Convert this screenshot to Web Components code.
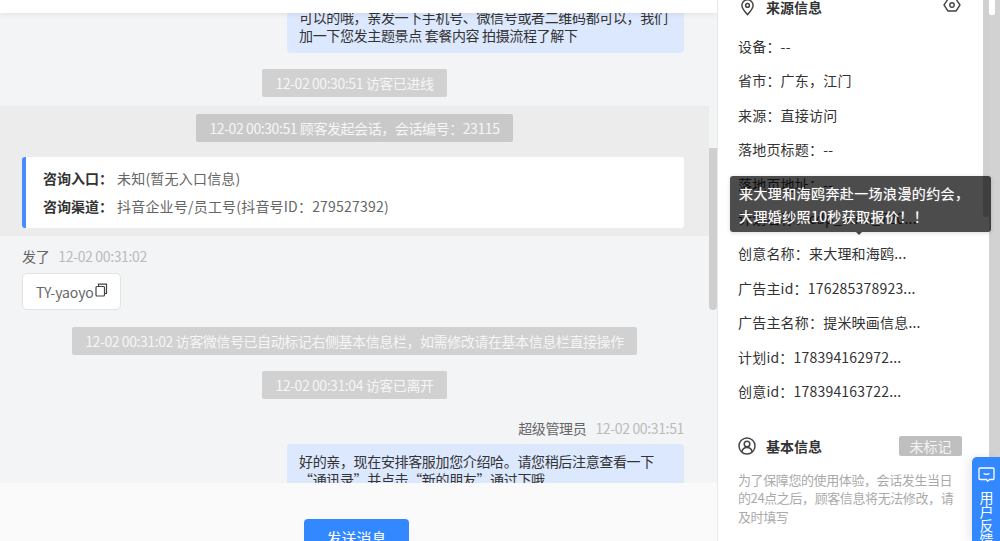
<!DOCTYPE html>
<html lang="zh">
<head>
<meta charset="utf-8">
<title>会话详情</title>
<style>
  html, body { margin: 0; height: 100%; overflow: hidden; }
  body {
    font-family: "Noto Sans CJK SC", "Liberation Sans", sans-serif;
    font-size: 14px;
    color: #333;
  }
</style>
</head>
<body>
<session-page></session-page>

<template id="session-page-tpl">
  <style>
    :host { display: grid; grid-template-columns: 717px 266px 6px 11px; height: 541px; position: relative; overflow: hidden; background: #f3f4f6; }
    .left { position: relative; display: flex; flex-direction: column; height: 541px; overflow: hidden; min-width: 0; }
    .top { height: 13px; flex: none; background: #fff; box-shadow: 0 1px 6px rgba(0,0,0,.08); position: relative; z-index: 1; }
    .scroll { display: grid; grid-template-columns: 709px 8px; height: 470px; flex: none; overflow: hidden; }
    .track { display: flex; flex-direction: column; background: #f3f4f6; }
    .track i { display: block; height: 162px; margin-top: 135px; background: #cfcfcf; border-radius: 0 0 4px 4px; }
    .foot { flex: 1; background: #fafafa; display: flex; justify-content: center; align-items: flex-start; padding-top: 36px; }
    .send { width: 105px; height: 40px; flex: none; margin-right: 4px; background: #3388ff; color: #fff; border-radius: 4px; text-align: center; line-height: 38px; font-size: 15px; }
    .right { background: #fff; border-left: 1px solid #e8e8e8; overflow: hidden; }
    .inbar { background: #fff; }
    .inbar i { display: block; height: 217px; background: #d0d0d0; border-radius: 0 0 3px 3px; }
    .outbar { background: #d2d2d2; }
    .outbar i { display: block; width: 6px; height: 15px; background: #fff; border-radius: 0 0 2px 2px; }
  </style>
  <div class="left">
    <div class="top"></div>
    <div class="scroll"><slot name="chat"></slot><div class="track"><i></i></div></div>
    <div class="foot"><div class="send">发送消息</div></div>
  </div>
  <div class="right"><slot name="side"></slot></div>
  <div class="inbar"><i></i></div>
  <div class="outbar"><i></i></div>
  <slot name="over"></slot>
</template>

<template id="chat-bubble-tpl">
  <style>
    :host { display: block; margin-left: 287px; width: 397px; box-sizing: border-box; background: #dce8fd; border-radius: 4px; padding: 8px 12px; font-size: 14px; letter-spacing: -.35px; line-height: 18px; color: #333; overflow: hidden; white-space: nowrap; }
  </style>
  <slot></slot>
</template>

<template id="sys-pill-tpl">
  <style>
    :host { display: block; text-align: center; height: 28px; }
    span { display: inline-block; height: 28px; line-height: 28px; padding: 0 13px; background: var(--pill, #d0d1d0); color: #f6f6f6; font-size: 14px; letter-spacing: -.42px; border-radius: 2px; white-space: nowrap; }
  </style>
  <span><slot></slot></span>
</template>

<template id="meta-line-tpl">
  <style>
    :host { display: block; font-size: 14px; letter-spacing: -.35px; line-height: 18px; color: #666; white-space: nowrap; }
    :host([align="right"]) { text-align: right; }
    b { font-weight: 400; color: #bbb; margin-left: 9px; }
  </style>
  <slot></slot><b><slot name="time"></slot></b>
</template>

<template id="info-row-tpl">
  <style>
    :host { display: block; height: 34.6px; line-height: 34.6px; font-size: 14px; letter-spacing: .2px; color: #333; white-space: nowrap; }
  </style>
  <slot></slot>
</template>

<template id="section-head-tpl">
  <style>
    :host { display: flex; align-items: center; height: 20px; font-size: 14px; font-weight: 700; color: #333; }
    .ic { width: 18px; height: 20px; display: flex; align-items: center; justify-content: center; margin-right: 10px; }
    .end { margin-left: auto; display: flex; align-items: center; font-weight: 400; }
  </style>
  <span class="ic"><slot name="icon"></slot></span>
  <slot></slot>
  <span class="end"><slot name="end"></slot></span>
</template>

<template id="feedback-tab-tpl">
  <style>
    :host { position: absolute; left: 972px; top: 457px; width: 28px; height: 84px; background: #3388ff; color: #fff; border-radius: 5px 0 0 0; box-shadow: -4px 0 10px rgba(0,0,0,.08); display: flex; flex-direction: column; align-items: center; overflow: hidden; font-size: 14px; line-height: 14px; padding-top: 10px; box-sizing: border-box; padding-left: 1px; }
    svg { width: 17px; height: 15px; flex: none; margin-bottom: 8px; }
    span { display: block; width: 14px; text-align: center; word-break: break-all; }
  </style>
  <svg viewBox="0 0 17 15" fill="none" stroke="#fff" stroke-width="1.3"><path d="M2 1h13a1 1 0 0 1 1 1v9.5a1 1 0 0 1-1 1h-3.5l-2 1.8-1-1.8H2a1 1 0 0 1-1-1V2a1 1 0 0 1 1-1z"/><path d="M5.5 6.5q3 1.8 6 0"/></svg>
  <span>用户反馈</span>
</template>

<template id="hover-tip-tpl">
  <style>
    :host { position: absolute; left: 730px; top: 176px; width: 261px; height: 56px; box-sizing: border-box; background: rgba(0,0,0,.7); border-radius: 3px; color: #fff; padding: 6px 9px; font-size: 14px; letter-spacing: .4px; line-height: 22.5px; box-shadow: 0 1px 4px rgba(0,0,0,.15); text-shadow: 0 0 1px rgba(255,255,255,.5); }
    :host::after { content: ""; position: absolute; left: 126px; bottom: -3px; border: 3px solid transparent; border-bottom: 0; border-top-color: #444; }
  </style>
  <slot></slot>
</template>

<script>
  function def(name) {
    customElements.define(name, class extends HTMLElement {
      constructor() {
        super();
        const shadow = this.attachShadow({ mode: 'open' });
        shadow.appendChild(document.getElementById(name + '-tpl').content.cloneNode(true));
      }
    });
  }
  ['session-page', 'chat-bubble', 'sys-pill', 'meta-line', 'info-row', 'section-head', 'feedback-tab', 'hover-tip'].forEach(def);

  class ChatLog extends HTMLElement {
    constructor() {
      super();
      const shadow = this.attachShadow({ mode: 'open' });
      shadow.innerHTML = `
        <style>
          :host { display: block; height: 470px; overflow: hidden; }
          .first { margin-top: -13px; height: 53px; }
          .p1 { margin-top: 16px; }
          .band { margin-top: 9px; background: #ececec; height: 130px; padding-top: 8px; box-sizing: border-box; --pill: #c9c9c9; }
          .card { margin: 15px 25px 0 22px; width: 662px; height: 71px; box-sizing: border-box; background: #fff; border-left: 4px solid #4a8bff; border-radius: 3px; padding: 7px 0 0 17px; font-size: 14px; line-height: 28px; color: #666; letter-spacing: .2px; }
          .card b { color: #333; font-weight: 700; margin-right: 4px; letter-spacing: 0; }
          .them { margin: 11px 0 0 22px; }
          .file { display: inline-flex; align-items: center; margin: 8px 0 0 22px; height: 37px; box-sizing: border-box; width: 99px; padding-left: 13px; background: #fff; border: 1px solid #e3e3e3; border-radius: 5px; font-size: 14px; letter-spacing: -.1px; color: #666; }
          .file svg { width: 13px; height: 14px; flex: none; margin: 0 0 3px 1px; }
          .p2 { margin-top: 17px; }
          .p3 { margin-top: 16px; }
          .me { margin: 20px 25px 0 0; }
          .second { margin-top: 7px; height: 60px; }
        </style>
        <chat-bubble class="first"><div>可以的哦，亲发一下手机号、微信号或者二维码都可以，我们</div><div>加一下您发主题景点 套餐内容 拍摄流程了解下</div></chat-bubble>
        <sys-pill class="p1">12-02 00:30:51 访客已进线</sys-pill>
        <div class="band">
          <sys-pill>12-02 00:30:51 顾客发起会话，会话编号：23115</sys-pill>
          <div class="card">
            <div><b>咨询入口：</b>未知(暂无入口信息)</div>
            <div><b>咨询渠道：</b>抖音企业号/员工号(抖音号ID：279527392)</div>
          </div>
        </div>
        <meta-line class="them">发了<span slot="time">12-02 00:31:02</span></meta-line>
        <div class="file">TY-yaoyo<svg viewBox="0 0 13 14" fill="none" stroke="#444" stroke-width="1.2"><rect x="1" y="3.5" width="8.5" height="9.5" rx="1"/><path d="M3.5 3.5V1.2h8v9.3H9.5"/></svg></div>
        <sys-pill class="p2">12-02 00:31:02 访客微信号已自动标记右侧基本信息栏，如需修改请在基本信息栏直接操作</sys-pill>
        <sys-pill class="p3">12-02 00:31:04 访客已离开</sys-pill>
        <meta-line class="me" align="right">超级管理员<span slot="time">12-02 00:31:51</span></meta-line>
        <chat-bubble class="second"><div>好的亲，现在安排客服加您介绍哈。请您稍后注意查看一下</div><div>“通讯录”并点击“新的朋友”通过下哦</div></chat-bubble>
      `;
    }
  }
  customElements.define('chat-log', ChatLog);

  class SidePanel extends HTMLElement {
    constructor() {
      super();
      const shadow = this.attachShadow({ mode: 'open' });
      shadow.innerHTML = `
        <style>
          :host { display: block; padding: 0 21px 0 20px; }
          .rows { margin-top: 11.5px; }
          .basic { margin-top: 26.5px; }
          .tag { display: inline-block; width: 63px; height: 20px; line-height: 20px; text-align: center; background: #bfbfbf; color: #f4f4f4; border-radius: 2px; font-size: 14px; }
          .note { margin-top: 15px; width: 222px; font-size: 13px; letter-spacing: -.4px; line-height: 18.5px; color: #aaa; }
          svg { display: block; }
        </style>
        <section-head style="margin-top:-3px">
          <svg slot="icon" width="15" height="17" viewBox="0 0 16 18" fill="none" stroke="#444" stroke-width="1.6"><path d="M8 16.6C4.6 12.8 2 10 2 6.8a6 6 0 0 1 12 0c0 3.2-2.6 6-6 9.8z"/><circle cx="8" cy="6.8" r="2"/></svg>
          来源信息
          <svg slot="end" width="18" height="14" viewBox="0 0 18 14" fill="none" stroke="#444" stroke-width="1.4" style="margin:-4px 1px 0 0"><path d="M5 1h8l4 6-4 6H5L1 7z"/><circle cx="9" cy="7" r="2.2"/></svg>
        </section-head>
        <div class="rows">
          <info-row>设备：--</info-row>
          <info-row>省市：广东，江门</info-row>
          <info-row>来源：直接访问</info-row>
          <info-row>落地页标题：--</info-row>
          <info-row>落地页地址：--</info-row>
          <info-row>计划名称：cdp_auto_720...</info-row>
          <info-row>创意名称：来大理和海鸥...</info-row>
          <info-row>广告主id：176285378923...</info-row>
          <info-row>广告主名称：提米映画信息...</info-row>
          <info-row>计划id：178394162972...</info-row>
          <info-row>创意id：178394163722...</info-row>
        </div>
        <section-head class="basic">
          <svg slot="icon" width="18" height="18" viewBox="0 0 18 18" fill="none" stroke="#444" stroke-width="1.5"><circle cx="9" cy="9" r="8"/><circle cx="9" cy="7" r="2.8"/><path d="M3.8 15c.6-3 2.6-4.4 5.2-4.4s4.6 1.4 5.2 4.4"/></svg>
          基本信息
          <span slot="end" class="tag">未标记</span>
        </section-head>
        <div class="note">为了保障您的使用体验，会话发生当日的24点之后，顾客信息将无法修改，请及时填写</div>
      `;
    }
  }
  customElements.define('side-panel', SidePanel);

  const page = document.querySelector('session-page');
  page.innerHTML = `
    <chat-log slot="chat"></chat-log>
    <side-panel slot="side"></side-panel>
    <hover-tip slot="over">来大理和海鸥奔赴一场浪漫的约会，<br>大理婚纱照10秒获取报价！！</hover-tip>
    <feedback-tab slot="over"></feedback-tab>
  `;
</script>
</body>
</html>
